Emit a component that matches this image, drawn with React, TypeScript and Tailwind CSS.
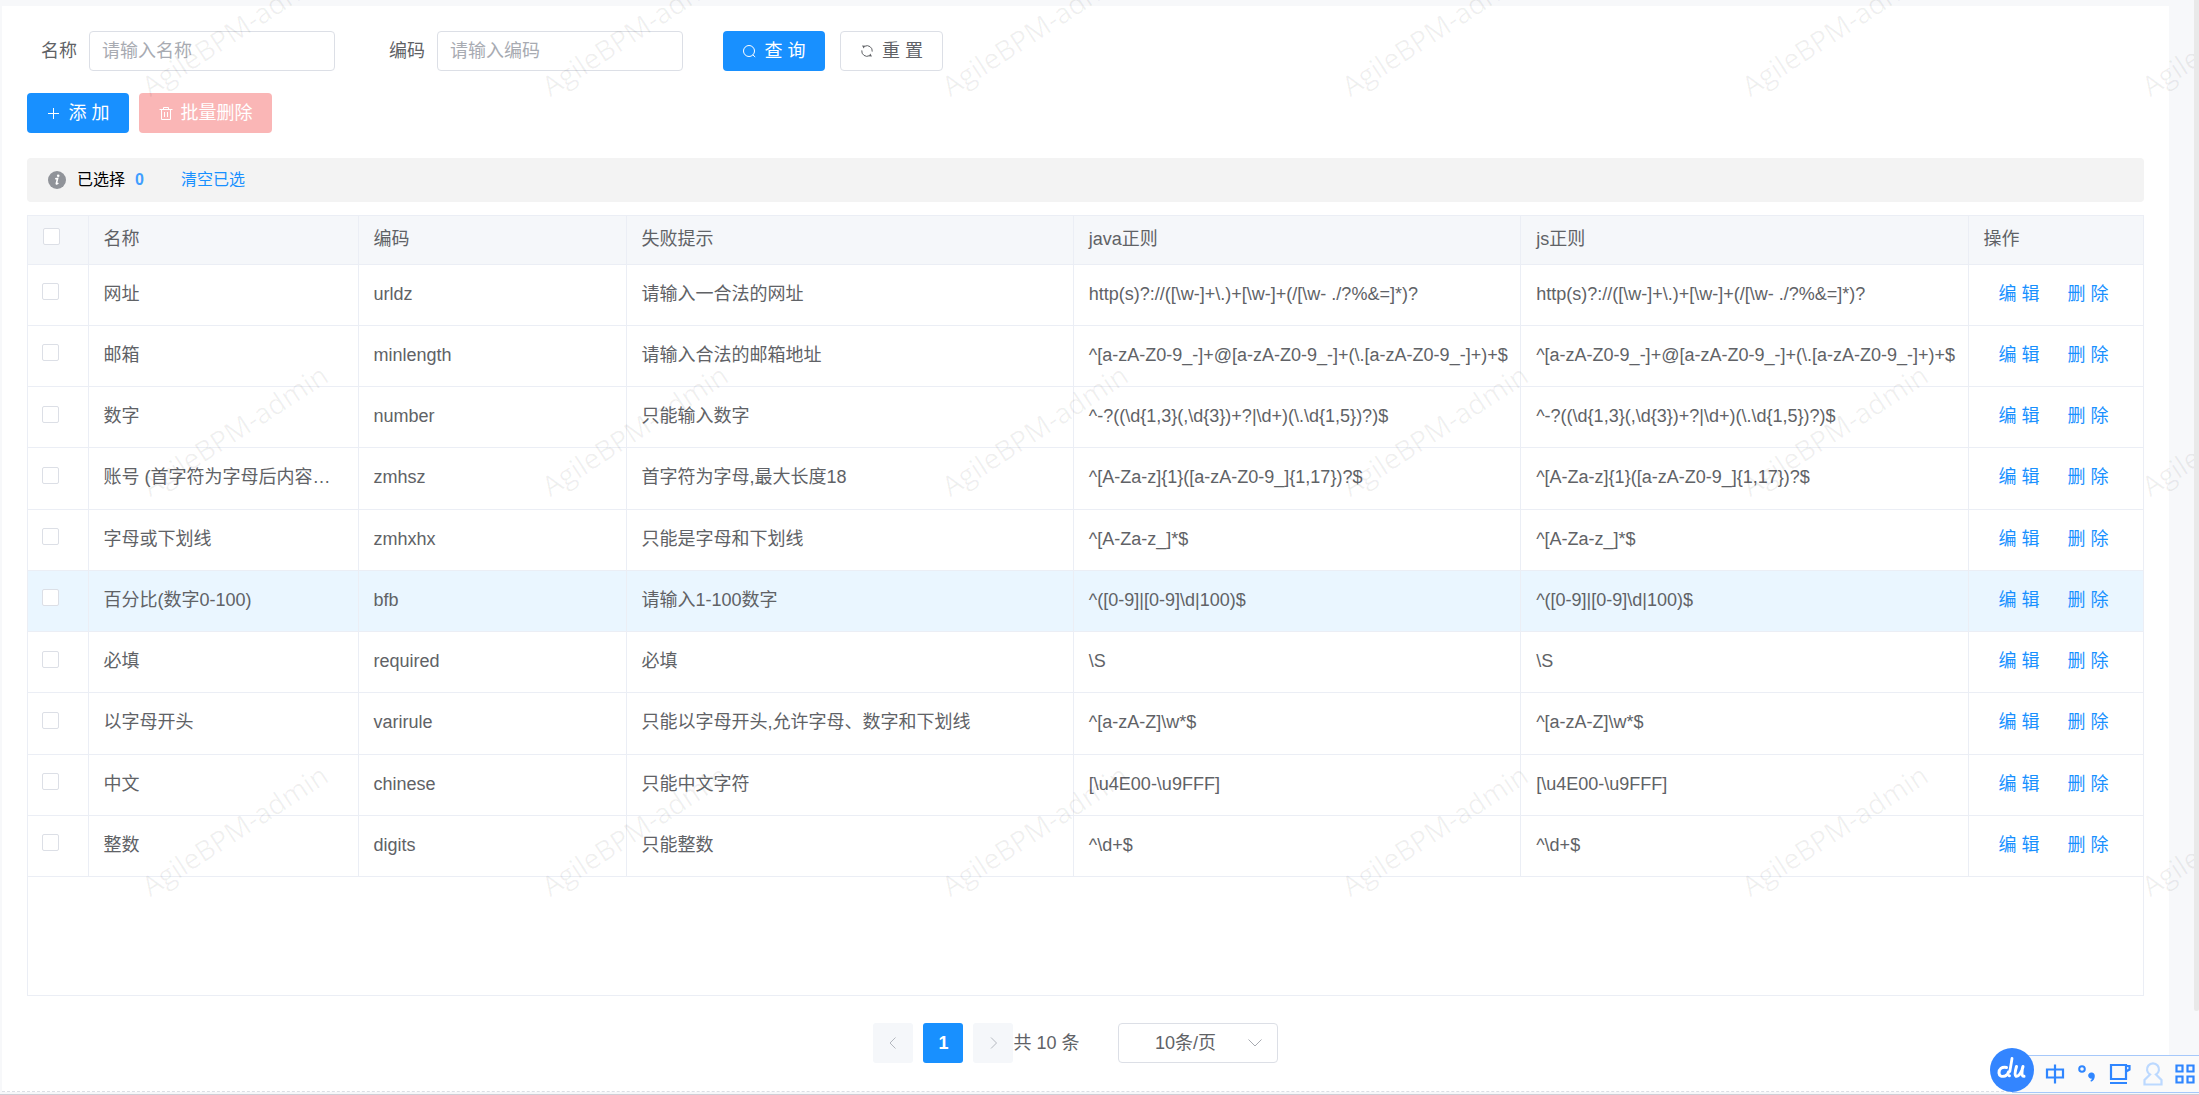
import React from "react";

type Rule = { name: string; code: string; tip: string; java: string; js: string; active?: boolean };

const same = (name: string, code: string, tip: string, re: string, active = false): Rule => ({
  name, code, tip, java: re, js: re, active,
});

const rules: Rule[] = [
  same("网址", "urldz", "请输入一合法的网址", "http(s)?://([\\w-]+\\.)+[\\w-]+(/[\\w- ./?%&=]*)?"),
  same("邮箱", "minlength", "请输入合法的邮箱地址", "^[a-zA-Z0-9_-]+@[a-zA-Z0-9_-]+(\\.[a-zA-Z0-9_-]+)+$"),
  same("数字", "number", "只能输入数字", "^-?((\\d{1,3}(,\\d{3})+?|\\d+)(\\.\\d{1,5})?)$"),
  same("账号 (首字符为字母后内容为字母数字)", "zmhsz", "首字符为字母,最大长度18", "^[A-Za-z]{1}([a-zA-Z0-9_]{1,17})?$"),
  same("字母或下划线", "zmhxhx", "只能是字母和下划线", "^[A-Za-z_]*$"),
  same("百分比(数字0-100)", "bfb", "请输入1-100数字", "^([0-9]|[0-9]\\d|100)$", true),
  same("必填", "required", "必填", "\\S"),
  same("以字母开头", "varirule", "只能以字母开头,允许字母、数字和下划线", "^[a-zA-Z]\\w*$"),
  same("中文", "chinese", "只能中文字符", "[\\u4E00-\\u9FFF]"),
  same("整数", "digits", "只能整数", "^\\d+$"),
];

const headers = ["名称", "编码", "失败提示", "java正则", "js正则", "操作"];

const marks = [100, 500, 900].flatMap((y) => [152, 552, 952, 1352, 1752, 2152].map((x) => ({ x, y })));

function SearchIcon() {
  return (
    <svg viewBox="0 0 14 14" className="size-3.5" fill="none" stroke="currentColor" aria-hidden="true">
      <circle cx="7" cy="7" r="5.5" />
      <path d="M10.8 10.8 13.2 13" />
    </svg>
  );
}

function RefreshIcon() {
  return (
    <svg viewBox="0 0 14 14" className="size-3.5" fill="none" stroke="currentColor" aria-hidden="true">
      <path d="M4.6 2.3A5.2 5.2 0 0 1 12.2 7.6M9.4 11.700A5.2 5.2 0 0 1 1.8 6.400" />
      <path d="M2 1.600 5.200 1.700 3.700 4.500zM12 12.400 8.800 12.300 10.300 9.500z" fill="currentColor" stroke="none" />
    </svg>
  );
}

function PlusIcon() {
  return (
    <svg viewBox="0 0 14 14" className="size-3.5" fill="none" stroke="currentColor" aria-hidden="true">
      <path d="M7.500 2v11M2 7.500h11" />
    </svg>
  );
}

function TrashIcon() {
  return (
    <svg viewBox="0 0 14 14" className="size-3.5" fill="none" stroke="currentColor" aria-hidden="true">
      <path d="M.5 3.500h13M2.500 3.500v10h9v-10M4.500 3.500v-2h5v2M5.500 6v5M8.500 6v5" />
    </svg>
  );
}

function InfoIcon() {
  return (
    <svg viewBox="0 0 18 18" className="size-[18px]" aria-hidden="true">
      <circle cx="9" cy="9" r="9" fill="#909399" />
      <circle cx="10.2" cy="4.8" r="1.3" fill="#fff" />
      <path d="M7.2 7.8 9.6 7.4 8.3 12.600Q8.2 13.600 10.400 12.200" fill="none" stroke="#fff" strokeWidth="1.6" />
    </svg>
  );
}

function Check({ label }: { label: string }) {
  return (
    <input
      type="checkbox"
      aria-label={label}
      className="block size-[17px] appearance-none rounded-[2px] border border-[#dcdfe6] bg-white checked:bg-[#1890ff]"
    />
  );
}

function Field({ id, label, placeholder }: { id: string; label: string; placeholder: string }) {
  return (
    <div className="flex items-center gap-3">
      <label htmlFor={id}>{label}</label>
      <input
        id={id}
        placeholder={placeholder}
        className="h-10 w-[246px] rounded-[4px] border border-[#dcdfe6] bg-white px-3 outline-none placeholder:text-[#a8abb2]"
      />
    </div>
  );
}

function ImeBar() {
  return (
    <aside className="fixed right-0 bottom-0.5 flex h-[38px] items-center gap-3 border-y border-[#a6c8fa] bg-[#fafafa] pr-1 pl-[33px] text-[#2f86ff]">
      <svg viewBox="0 0 44 44" className="absolute -top-2 -left-[22px] size-11" role="img" aria-label="du">
        <circle cx="22" cy="22" r="22" fill="#3385ff" />
        <g fill="none" stroke="#fff" strokeLinecap="round" strokeLinejoin="round">
          <path d="M16.5 19.5Q9 18.5 9 25Q9.5 29.5 15 28Q18 27 18.5 24" strokeWidth="3" />
          <path d="M22 10.5Q21 17 19.8 23.5" strokeWidth="2.8" />
          <path d="M26.5 18.5Q24 27 26 28.3Q29 29 32 22L33 18.5M32.2 22Q31.2 28.5 34 28.3" strokeWidth="3" />
        </g>
        <circle cx="19.4" cy="27.8" r="1.5" fill="#fff" />
      </svg>
      <svg viewBox="0 0 20 20" className="size-5" fill="none" stroke="currentColor" strokeWidth="2.2" aria-hidden="true">
        <path d="M2 5.5h16v8H2zM10 0.5v19" />
      </svg>
      <svg viewBox="0 0 20 20" className="size-5" aria-hidden="true">
        <circle cx="5" cy="5" r="2.8" fill="none" stroke="currentColor" strokeWidth="2" />
        <path d="M14.500 8.500a3.200 3.200 0 0 1 3.300 3.500c0 3.200-1.600 4.800-3.800 5.700l-.6-1.200c1-.6 1.500-1 1.600-1.900a3.100 3.100 0 1 1-.5-6.100z" fill="currentColor" />
      </svg>
      <svg viewBox="0 0 22 22" className="size-[22px]" fill="none" stroke="currentColor" strokeWidth="2.2" aria-hidden="true">
        <path d="M2 2h15v14H2zM17 3h3.500v3.500L17 8.500M1 20h17" />
      </svg>
      <svg viewBox="0 0 20 24" className="h-6 w-5 text-[#bcd9ff]" fill="none" stroke="currentColor" strokeWidth="2.200" aria-hidden="true">
        <path d="M7 12.500a6 6 0 1 1 6 0l5.500 5.500v4.500h-17V18z" />
      </svg>
      <svg viewBox="0 0 20 20" className="size-5" fill="none" stroke="currentColor" strokeWidth="2.2" aria-hidden="true">
        <path d="M1.500 1.500h6v6h-6zM12.500 1.500h6v6h-6zM1.500 12.500h6v6h-6zM12.500 12.500h6v6h-6z" />
      </svg>
    </aside>
  );
}

export default function App() {
  return (
    <div className="relative min-h-screen overflow-hidden border-b border-[#cfcfd6] bg-[#f7f8fa] pt-1.5 pr-[30px] pl-0.5 font-['Liberation_Sans','Noto_Sans_CJK_SC',sans-serif] text-[18px] leading-6 text-[#606266]">
      <main className="border-b border-dashed border-[#dcdfe6] bg-white px-[25px] pt-[25px] pb-7">
        <form className="flex items-center pl-3.5" onSubmit={(e) => e.preventDefault()}>
          <Field id="name" label="名称" placeholder="请输入名称" />
          <div className="ml-[54px]">
            <Field id="code" label="编码" placeholder="请输入编码" />
          </div>
          <button className="ml-10 flex h-10 w-[102px] items-center justify-center gap-2 rounded-[4px] bg-[#1890ff] text-white">
            <SearchIcon />查 询
          </button>
          <button type="button" className="ml-[15px] flex h-10 w-[103px] items-center justify-center gap-2 rounded-[4px] border border-[#dcdfe6] bg-white">
            <RefreshIcon />重 置
          </button>
        </form>

        <div className="mt-[22px] flex gap-2.5">
          <button className="flex h-10 w-[102px] items-center justify-center gap-2 rounded-[4px] bg-[#1890ff] text-white">
            <PlusIcon />添 加
          </button>
          <button disabled className="flex h-10 w-[133px] items-center justify-center gap-2 rounded-[4px] bg-[#fab6b6] text-white">
            <TrashIcon />批量删除
          </button>
        </div>

        <div className="mt-[25px] flex h-11 items-center rounded-[4px] bg-[#f3f3f3] pl-[21px] text-[16px]">
          <InfoIcon />
          <span className="ml-[11px] text-black">已选择</span>
          <strong className="ml-2.5 text-[#409eff]">0</strong>
          <a href="#clear" className="ml-[37px] text-[#1890ff]">清空已选</a>
        </div>

        <div className="mt-[13px] min-h-[781px] border border-[#ebeef5]">
          <table className="h-[661px] w-full table-fixed border-collapse text-left">
            <colgroup>
              <col className="w-[60px]" />
              <col className="w-[270px]" />
              <col className="w-[268px]" />
              <col />
              <col />
              <col />
              <col className="w-[175px]" />
            </colgroup>
            <thead>
              <tr className="h-12 border-b border-[#ebeef5] bg-[#f5f7fa]">
                <th className="border-r border-[#ebeef5] pb-1.5 pl-[15px]"><Check label="全选" /></th>
                {headers.map((h) => (
                  <th key={h} className="border-r border-[#ebeef5] px-[15px] pb-0.5 font-normal last:border-r-0">{h}</th>
                ))}
              </tr>
            </thead>
            <tbody>
              {rules.map((r) => (
                <tr key={r.code} className={r.active ? "h-[61px] border-b border-[#ebeef5] bg-[#eaf6ff]" : "h-[61px] border-b border-[#ebeef5]"}>
                  <td className="border-r border-[#ebeef5] pb-1.5 pl-3.5"><Check label={r.name} /></td>
                  {[r.name, r.code, r.tip].map((t, i) => (
                    <td key={i} className="truncate border-r border-[#ebeef5] px-[15px] pb-0.5">{t}</td>
                  ))}
                  {[r.java, r.js].map((t, i) => (
                    <td key={i} className="truncate border-r border-[#ebeef5] pr-1.5 pb-0.5 pl-[15px]">{t}</td>
                  ))}
                  <td className="pb-0.5 pl-[30px]">
                    <div className="flex gap-7 text-[#1890ff]">
                      <button>编 辑</button>
                      <button>删 除</button>
                    </div>
                  </td>
                </tr>
              ))}
            </tbody>
          </table>
        </div>

        <nav className="mt-[27px] mr-5 flex items-center justify-center" aria-label="分页">
          <button aria-label="上一页" className="flex size-10 items-center justify-center rounded-[3px] bg-[#f5f7fa] text-[#b4b8bf]">
            <svg viewBox="0 0 12 12" className="size-3" fill="none" stroke="currentColor" aria-hidden="true"><path d="M8.500 .5 3 6l5.500 5.500" /></svg>
          </button>
          <button className="ml-2.5 size-10 rounded-[3px] bg-[#1890ff] font-bold text-white">1</button>
          <button aria-label="下一页" className="ml-2.5 flex size-10 items-center justify-center rounded-[3px] bg-[#f5f7fa] text-[#b4b8bf]">
            <svg viewBox="0 0 12 12" className="size-3" fill="none" stroke="currentColor" aria-hidden="true"><path d="M4 .5 9.500 6 4 11.500" /></svg>
          </button>
          <span>共 10 条</span>
          <div className="relative ml-[38px]">
            <select aria-label="每页条数" className="h-10 w-40 appearance-none rounded-[4px] border border-[#dcdfe6] bg-white pr-6 text-center outline-none">
              <option>10条/页</option>
            </select>
            <svg viewBox="0 0 14 8" className="pointer-events-none absolute top-4 right-4 h-2 w-3.5 text-[#a8abb2]" fill="none" stroke="currentColor" aria-hidden="true"><path d="M.5 .5 7 7l6.500-6.500" /></svg>
          </div>
        </nav>
      </main>

      <div className="pointer-events-none absolute inset-0" aria-hidden="true">
        {marks.map((m) => (
          <span
            key={`${m.x}-${m.y}`}
            className="absolute origin-bottom-left -rotate-33 font-['Open_Sans','Noto_Sans',sans-serif] text-[28px] leading-7 whitespace-nowrap text-black/6"
            style={{ left: m.x, top: m.y - 28 }}
          >
            AgileBPM-admin
          </span>
        ))}
      </div>

      <div className="absolute top-0 right-0 h-[1011px] w-[5px] rounded-b-full bg-[#e9e9e9]" />
      <ImeBar />
    </div>
  );
}
